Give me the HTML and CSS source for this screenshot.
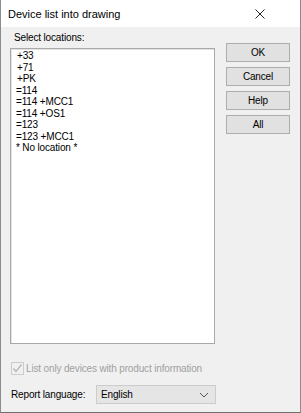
FILE: index.html
```html
<!DOCTYPE html>
<html>
<head lang="en">
    <meta charset="UTF-8">
    <title>Device list into drawing</title>
    <link rel="stylesheet" href="styles.css">
</head>
<body>
<div class="dialog">
    <div class="titlebar">
        <span class="title">Device list into drawing</span>
        <svg class="close" width="10" height="10" viewBox="0 0 10 10">
            <path d="M0.5 0.5 L9.5 9.5 M9.5 0.5 L0.5 9.5" stroke="#222" stroke-width="1" fill="none"/>
        </svg>
    </div>
    <div class="content">
        <div class="main">
            <div class="left">
                <div class="label">Select locations:</div>
                <ul class="listbox">
                    <li class="sub">+33</li>
                    <li class="sub">+71</li>
                    <li class="sub">+PK</li>
                    <li>=114</li>
                    <li>=114 +MCC1</li>
                    <li>=114 +OS1</li>
                    <li>=123</li>
                    <li>=123 +MCC1</li>
                    <li>* No location *</li>
                </ul>
            </div>
            <div class="buttons">
                <button>OK</button>
                <button>Cancel</button>
                <button>Help</button>
                <button>All</button>
            </div>
        </div>
        <label class="check">
            <span class="box">
                <svg width="11" height="11" viewBox="0 0 11 11">
                    <path d="M1.5 5.5 L4 8.5 L9.5 1.5" stroke="#b5b5b5" stroke-width="1.3" fill="none"/>
                </svg>
            </span>
            <span>List only devices with product information</span>
        </label>
        <div class="lang">
            <span class="lang-label">Report language:</span>
            <div class="select">
                <span>English</span>
                <svg width="10" height="6" viewBox="0 0 10 6">
                    <path d="M1 1 L5 5 L9 1" stroke="#555" stroke-width="1" fill="none"/>
                </svg>
            </div>
        </div>
    </div>
</div>
</body>
</html>
```

FILE: styles.css
```css
* {
    margin: 0;
    padding: 0;
    box-sizing: border-box;
}

body {
    width: 301px;
    height: 413px;
    font-family: "Liberation Sans", Arial, sans-serif;
    font-size: 10px;
    letter-spacing: -0.15px;
    color: #000;
    background: #f0f0f0;
}

.dialog {
    height: 413px;
    border-left: 1px solid #8c8c8c;
    border-right: 1px solid #8c8c8c;
    border-bottom: 1px solid #6e6e6e;
    background: #f0f0f0;
}

.titlebar {
    height: 27px;
    background: #fff;
    display: flex;
    align-items: center;
    justify-content: space-between;
    padding: 0 35px 0 7px;
}

.title {
    font-family: "Liberation Sans", Arial, sans-serif;
    font-size: 11px;
    letter-spacing: 0;
    color: #000;
}

.content {
    padding: 4px 10px 0 9px;
}

.main {
    display: flex;
    gap: 11px;
}

.left {
    width: 205px;
}

.label {
    height: 13px;
    line-height: 13px;
    padding-left: 4px;
    margin-bottom: 4px;
}

ul {
    list-style: none;
}

.listbox {
    height: 296px;
    background: #fff;
    border: 1px solid #a9a9a9;
    box-shadow: inset 1px 1px 0 #e3e3e3;
    padding: 1px 0 0 5px;
}

.listbox li {
    height: 11.5px;
    line-height: 11.5px;
}

.listbox li.sub {
    padding-left: 1px;
}

.buttons {
    display: flex;
    flex-direction: column;
    gap: 5px;
    padding-top: 12px;
}

button {
    width: 64px;
    height: 19px;
    font-family: "Liberation Sans", Arial, sans-serif;
    font-size: 10px;
    letter-spacing: -0.15px;
    background: #e1e1e1;
    border: 1px solid #adadad;
    color: #000;
}

.check {
    display: flex;
    align-items: center;
    gap: 2px;
    margin-top: 17px;
    padding-left: 1px;
    color: #a0a0a0;
    height: 14px;
}

.box {
    width: 13px;
    height: 13px;
    border: 1px solid #cccccc;
    background: #f0f0f0;
    display: flex;
    align-items: center;
    justify-content: center;
}

.lang {
    display: flex;
    align-items: center;
    margin-top: 10px;
    padding-left: 1px;
}

.lang-label {
    width: 85px;
    white-space: nowrap;
}

.select {
    width: 120px;
    height: 19px;
    background: #e5e5e5;
    border: 1px solid #cccccc;
    display: flex;
    align-items: center;
    justify-content: space-between;
    padding: 0 6px 0 4px;
}
```
